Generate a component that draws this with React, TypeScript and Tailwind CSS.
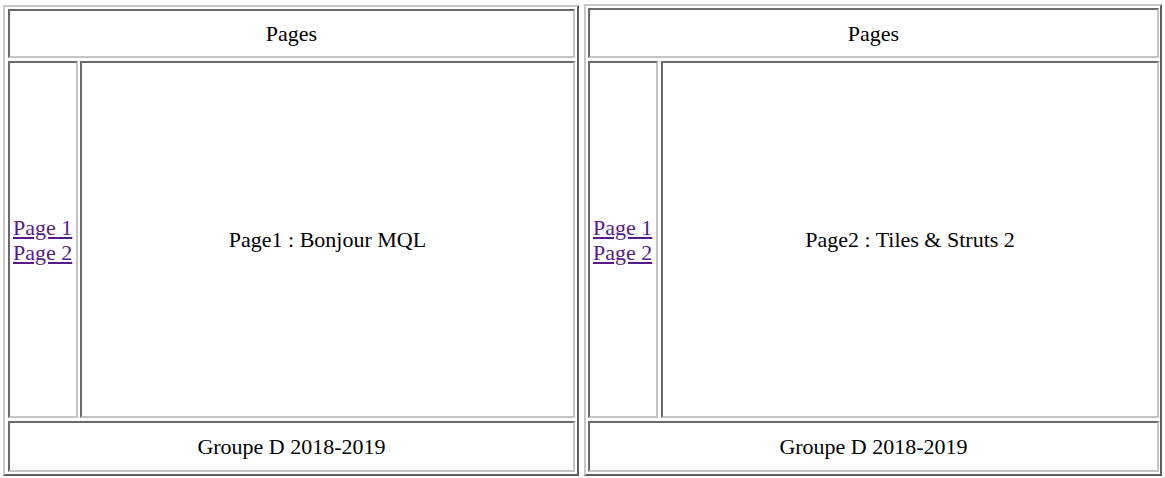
const cell =
  "border-2 border-t-[#6a6a6a] border-l-[#6a6a6a] border-b-[#c4c4c4] border-r-[#c4c4c4] bg-white";

type FrameProps = {
  content: string;
  box: string;
  head: string;
  mid: string;
  foot: string;
};

const Frame = (props: FrameProps) => {
  return (
    <div
      className={
        "flex flex-col gap-[3px] border-2 border-t-[#c8c8c8] border-l-[#c8c8c8] border-b-[#5e5e5e] border-r-[#5e5e5e] " +
        props.box
      }
    >
      <div className={cell + " flex items-center justify-center " + props.head}>Pages</div>
      <div className={"flex " + props.mid}>
        <div className={cell + " w-[70px] flex flex-col justify-center px-[3px]"}>
          <a href="#" className="text-[#551a8b] underline leading-[25px]">
            Page 1
          </a>
          <a href="#" className="text-[#551a8b] underline leading-[25px]">
            Page 2
          </a>
        </div>
        <div className={cell + " flex-1 flex items-center justify-center"}>{props.content}</div>
      </div>
      <div className={cell + " flex items-center justify-center " + props.foot}>Groupe D 2018-2019</div>
    </div>
  );
};

const App = () => {
  return (
    <div
      className="bg-white w-[1165px] h-[478px] flex items-start gap-[5px] pt-[4px] pl-[3px] text-[22px] text-black"
      style={{ fontFamily: '"Liberation Serif", "Times New Roman", serif' }}
    >
      <Frame
        content="Page1 : Bonjour MQL"
        box="mt-px w-[576px] h-[471px] pt-[2px] pb-[2px] pl-[3px] pr-[2px]"
        head="h-[49px]"
        mid="h-[357px] gap-[2px]"
        foot="h-[51px]"
      />
      <Frame
        content="Page2 : Tiles & Struts 2"
        box="w-[578px] h-[472px] pt-[2px] pb-[2px] pl-[2px] pr-[1px]"
        head="h-[50px]"
        mid="h-[357px] gap-[3px]"
        foot="h-[51px]"
      />
    </div>
  );
};

export default App;
